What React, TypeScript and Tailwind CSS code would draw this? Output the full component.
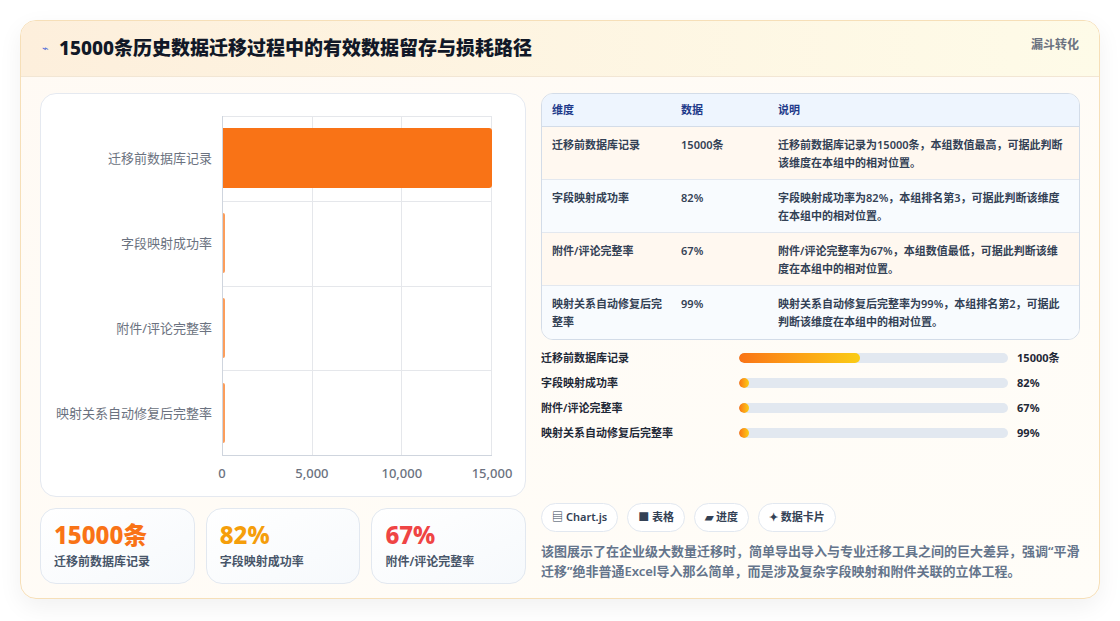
const rows = [
  { name: "迁移前数据库记录", value: "15000条", v: 15000, desc: "迁移前数据库记录为15000条，本组数值最高，可据此判断该维度在本组中的相对位置。", bg: "bg-[#fff8f0]" },
  { name: "字段映射成功率", value: "82%", v: 82, desc: "字段映射成功率为82%，本组排名第3，可据此判断该维度在本组中的相对位置。", bg: "bg-[#f8fbfe]" },
  { name: "附件/评论完整率", value: "67%", v: 67, desc: "附件/评论完整率为67%，本组数值最低，可据此判断该维度在本组中的相对位置。", bg: "bg-[#fff8f0]" },
  { name: "映射关系自动修复后完整率", value: "99%", v: 99, desc: "映射关系自动修复后完整率为99%，本组排名第2，可据此判断该维度在本组中的相对位置。", bg: "bg-[#f8fbfe]" },
];

const font = { fontFamily: '"Noto Sans", "Noto Sans CJK SC", sans-serif' };

const Chart = () => (
  <div className="h-[404px] rounded-2xl border border-[#e5e9f0] bg-white pt-[22px] pl-[12px] pr-[14px]">
    <div className="flex">
      <div className="flex w-[169px] flex-col">
        {rows.map((r) => (
          <div key={r.name} className="flex h-[85px] items-center justify-end pr-[10px] text-[13px] text-[#6b7280]">
            {r.name}
          </div>
        ))}
      </div>
      <div className="relative h-[340px] w-[270px] border-l border-b border-[#cfd5de]">
        <div className="absolute inset-0 grid grid-cols-3 grid-rows-4">
          {Array.from({ length: 12 }).map((_, i) => (
            <div key={i} className="border-r border-t border-[#e5e7eb]" />
          ))}
        </div>
        <div className="absolute inset-0 flex flex-col">
          {rows.map((r) => (
            <div key={r.name} className="flex h-[85px] items-center">
              <div
                className="h-[60px] rounded-r-[3px] bg-[#f97316]"
                style={{ width: `${Math.max((r.v / 15000) * 100, 0.6)}%`, opacity: r.v === 15000 ? 1 : 0.7 }}
              />
            </div>
          ))}
        </div>
      </div>
    </div>
    <div className="relative ml-[169px] h-6 w-[270px] text-[13px] font-medium text-[#6b7280]">
      <span className="absolute top-[8px] -translate-x-1/2" style={{ left: "0%" }}>0</span>
      <span className="absolute top-[8px] -translate-x-1/2" style={{ left: "33.3%" }}>5,000</span>
      <span className="absolute top-[8px] -translate-x-1/2" style={{ left: "66.6%" }}>10,000</span>
      <span className="absolute top-[8px] -translate-x-1/2" style={{ left: "100%" }}>15,000</span>
    </div>
  </div>
);

const Stat = ({ v, l, c }: { v: string; l: string; c: string }) => (
  <div className="flex-1 rounded-2xl border border-[#e2e8f0] bg-gradient-to-br from-white to-[#f6f9fc] px-[13px] pt-[10px] pb-[12px]">
    <div className={`text-[24px] font-extrabold leading-[32px] ${c}`}>{v}</div>
    <div className="mt-[2px] text-[12px] font-semibold text-[#475569]">{l}</div>
  </div>
);

export default function App() {
  return (
    <div className="min-h-[621px] bg-white p-5" style={font}>
      <div className="h-[579px] overflow-hidden rounded-2xl border border-[#f6dfb8] bg-gradient-to-br from-[#fffaf4] to-[#fffdf8] shadow-[0_8px_24px_rgba(0,0,0,0.06)]">
        <div className="flex h-[56px] items-center justify-between border-b border-[#f2e6d4] bg-gradient-to-r from-[#fdefdc] to-[#fefbe8] pl-[21px] pr-5">
          <div className="flex items-center gap-[10px]">
            <span className="text-[11px] text-[#4f6bd8]">⌁</span>
            <h1 className="text-[19px] font-extrabold text-[#111827]">15000条历史数据迁移过程中的有效数据留存与损耗路径</h1>
          </div>
          <span className="-mt-[8px] text-[12px] font-bold text-[#6b7280]">漏斗转化</span>
        </div>
        <div className="flex gap-[15px] px-[19px] pt-[16px]">
          <div className="flex w-[487px] flex-col gap-[11px]">
            <Chart />
            <div className="flex gap-[11px]">
              <Stat v="15000条" l="迁移前数据库记录" c="text-[#f97316]" />
              <Stat v="82%" l="字段映射成功率" c="text-[#f59e0b]" />
              <Stat v="67%" l="附件/评论完整率" c="text-[#ef4444]" />
            </div>
          </div>
          <div className="flex w-[540px] flex-col">
            <div className="overflow-hidden rounded-xl border border-[#d3dce8] text-[11px] font-semibold text-[#334155]">
              <div className="flex h-[33px] items-center border-b border-[#d3dce8] bg-[#eef5fe] text-[#1e3a8a]">
                <div className="w-[139px] pl-[10px]">维度</div>
                <div className="w-[97px]">数据</div>
                <div className="flex-1">说明</div>
              </div>
              {rows.map((r, i) => (
                <div key={r.name} className={`flex h-[53px] items-start pt-[9px] leading-[18px] ${r.bg} ${i < 3 ? "border-b border-[#e3e8ef]" : ""}`}>
                  <div className="w-[139px] pl-[10px] pr-3">{r.name}</div>
                  <div className="w-[97px]">{r.value}</div>
                  <div className="flex-1 pr-[12px]">{r.desc}</div>
                </div>
              ))}
            </div>
            <div className="mt-[9px] flex flex-col gap-[7px]">
              {rows.map((r) => (
                <div key={r.name} className="flex h-[18px] items-center text-[11px] font-semibold text-[#1f2937]">
                  <div className="w-[198px]">{r.name}</div>
                  <div className="h-[10px] w-[269px] overflow-hidden rounded-full bg-[#e2e8f0]">
                    <div
                      className="h-full rounded-full bg-gradient-to-r from-[#f97316] to-[#facc15]"
                      style={{ width: r.v === 15000 ? "45%" : "10px" }}
                    />
                  </div>
                  <div className="pl-[9px] font-bold">{r.value}</div>
                </div>
              ))}
            </div>
            <div className="mt-[61px] flex gap-[9px] text-[11px] font-semibold text-[#334155]">
              <span className="rounded-full border border-[#e2e8f0] bg-white px-[10px] py-[5px]">▤ Chart.js</span>
              <span className="rounded-full border border-[#e2e8f0] bg-white px-[10px] py-[5px]">■ 表格</span>
              <span className="rounded-full border border-[#e2e8f0] bg-white px-[10px] py-[5px]">▰ 进度</span>
              <span className="rounded-full border border-[#e2e8f0] bg-white px-[10px] py-[5px]">✦ 数据卡片</span>
            </div>
            <p className="mt-[9px] text-[13px] font-semibold leading-[20px] text-[#64748b]">
              该图展示了在企业级大数量迁移时，简单导出导入与专业迁移工具之间的巨大差异，强调“平滑迁移”绝非普通Excel导入那么简单，而是涉及复杂字段映射和附件关联的立体工程。
            </p>
          </div>
        </div>
      </div>
    </div>
  );
}
